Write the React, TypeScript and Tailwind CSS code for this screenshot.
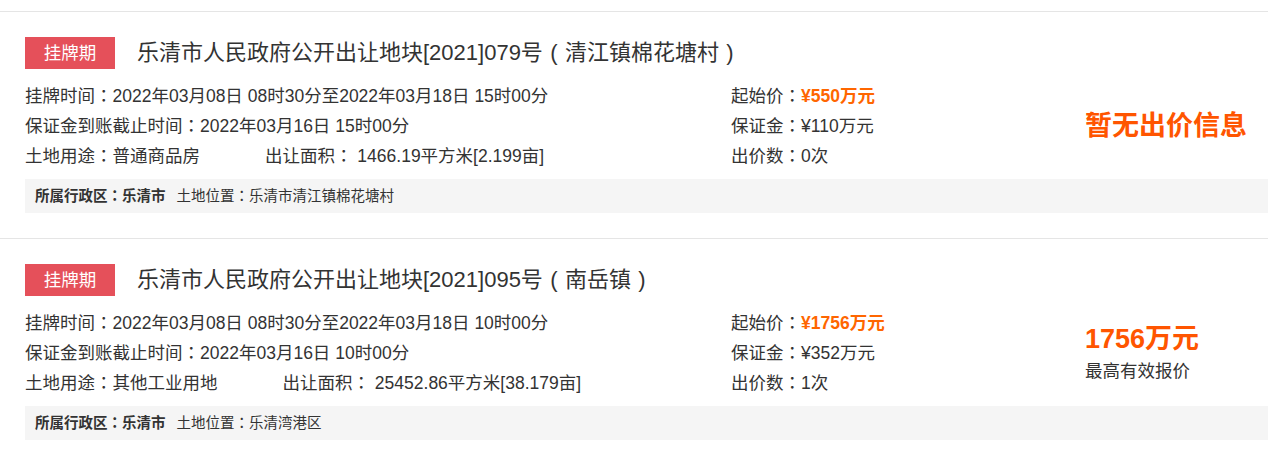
import React from 'react';

interface Plot {
    title: string;
    listTime: string;
    depositDeadline: string;
    usage: string;
    area: string;
    startPrice: string;
    deposit: string;
    bids: string;
    district: string;
    location: string;
    topBid?: string;
}

const plots: Plot[] = [
    {
        title: '乐清市人民政府公开出让地块[2021]079号（清江镇棉花塘村）',
        listTime: '2022年03月08日 08时30分至2022年03月18日 15时00分',
        depositDeadline: '2022年03月16日 15时00分',
        usage: '普通商品房',
        area: '1466.19平方米[2.199亩]',
        startPrice: '¥550万元',
        deposit: '¥110万元',
        bids: '0次',
        district: '乐清市',
        location: '乐清市清江镇棉花塘村',
    },
    {
        title: '乐清市人民政府公开出让地块[2021]095号（南岳镇）',
        listTime: '2022年03月08日 08时30分至2022年03月18日 10时00分',
        depositDeadline: '2022年03月16日 10时00分',
        usage: '其他工业用地',
        area: '25452.86平方米[38.179亩]',
        startPrice: '¥1756万元',
        deposit: '¥352万元',
        bids: '1次',
        district: '乐清市',
        location: '乐清湾港区',
        topBid: '1756万元',
    },
];

// full-width colon and brackets sit centred in their box in the reference
const Txt: React.FC<{ children: string }> = ({ children }) => (
    <>
        {children.split(/([：（）])/).map((part, i) => {
            if (part === '：') {
                return (
                    <span key={i} className="font-['Noto_Sans_CJK_TC'] leading-[0]">
                        {part}
                    </span>
                );
            }
            if (part === '（' || part === '）') {
                return (
                    <span key={i} className="inline-block w-[1em] text-center leading-[0]">
                        {part === '（' ? '(' : ')'}
                    </span>
                );
            }
            return part;
        })}
    </>
);

const PlotCard: React.FC<{ plot: Plot }> = ({ plot }) => (
    <div className="border-t border-[#e5e5e5] pt-[25px] pb-[25px] pl-[25px]">
        <div className="flex items-center h-[32px]">
            <span className="w-[90px] h-[32px] flex items-center justify-center bg-[#e5505a] text-white text-[17.5px]">
                挂牌期
            </span>
            <h3 className="ml-[22px] text-[22px] leading-[32px] text-[#333] whitespace-nowrap">
                <Txt>{plot.title}</Txt>
            </h3>
        </div>

        <div className="flex mt-[12px] text-[17.5px] leading-[30px] text-[#333]">
            <div className="w-[706px] shrink-0">
                <p><Txt>{`挂牌时间：${plot.listTime}`}</Txt></p>
                <p><Txt>{`保证金到账截止时间：${plot.depositDeadline}`}</Txt></p>
                <p>
                    <Txt>{`土地用途：${plot.usage}`}</Txt>
                    <span className="ml-[65px]">
                        <Txt>{`出让面积： ${plot.area}`}</Txt>
                    </span>
                </p>
            </div>
            <div className="w-[354px] shrink-0">
                <p>
                    <Txt>起始价：</Txt>
                    <span className="font-bold text-[#ff6600]">{plot.startPrice}</span>
                </p>
                <p><Txt>{`保证金：${plot.deposit}`}</Txt></p>
                <p><Txt>{`出价数：${plot.bids}`}</Txt></p>
            </div>
            <div className="flex flex-col justify-center">
                {plot.topBid ? (
                    <>
                        <p className="text-[27px] leading-[34px] font-bold text-[#ff5500]">{plot.topBid}</p>
                        <p className="mt-[2px] leading-[26px]">最高有效报价</p>
                    </>
                ) : (
                    <p className="text-[27px] leading-[34px] font-bold text-[#ff5500]">暂无出价信息</p>
                )}
            </div>
        </div>

        <div className="mt-[8px] h-[34px] bg-[#f5f5f5] px-[10px] flex items-center text-[14.5px] leading-[20px] text-[#333]">
            <span className="font-bold">
                <Txt>{`所属行政区：${plot.district}`}</Txt>
            </span>
            <span className="ml-[11px]">
                <Txt>{`土地位置：${plot.location}`}</Txt>
            </span>
        </div>
    </div>
);

export default function App() {
    return (
        <div
            className="w-[1268px] h-[452px] overflow-hidden bg-white pt-[11px]"
            style={{ fontFamily: '"Liberation Sans", "Noto Sans CJK SC", sans-serif' }}
        >
            {plots.map((p) => (
                <PlotCard key={p.title} plot={p} />
            ))}
        </div>
    );
}
